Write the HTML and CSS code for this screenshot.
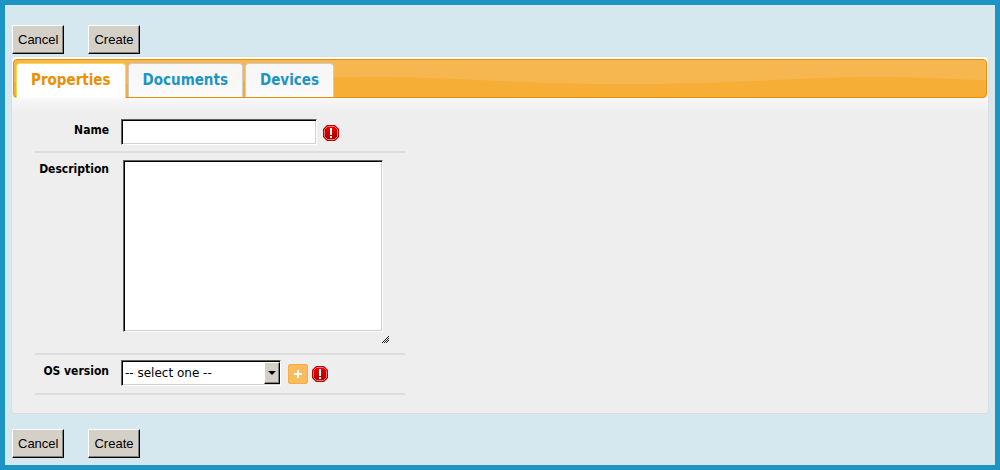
FILE: index.html
```html
<!DOCTYPE html>
<html lang="en">
<head>
  <meta charset="UTF-8">
  <meta name="viewport" content="width=device-width, initial-scale=1.0">
  <title>Create</title>
  <link rel="stylesheet" href="styles.css">
</head>
<body>
  <svg class="sprite" width="0" height="0" aria-hidden="true">
    <defs>
      <linearGradient id="red" x1="0" y1="0" x2="0" y2="1">
        <stop offset="0" stop-color="#f20000"/>
        <stop offset="1" stop-color="#a40000"/>
      </linearGradient>
    </defs>
    <symbol id="required" viewBox="0 0 16 16">
      <path fill="#c00000" d="M4 0h8l4 4v8l-4 4H4l-4-4V4z"/>
      <path fill="url(#red)" stroke="#e87878" d="M4.500 1.500h7l3 3v7l-3 3h-7l-3-3v-7z"/>
      <path fill="#fff" d="M7 3h2v7H7zM7 11h2v2H7z"/>
    </symbol>
  </svg>

  <main class="page">
    <div class="actions">
      <button type="button" class="btn">Cancel</button>
      <button type="submit" form="create-form" class="btn">Create</button>
    </div>

    <div class="tabs">
      <nav class="tabs-nav">
        <a href="#properties" class="tab active">Properties</a>
        <a href="#documents" class="tab">Documents</a>
        <a href="#devices" class="tab">Devices</a>
      </nav>

      <form class="panel" id="create-form">
        <div class="row">
          <label for="name">Name</label>
          <div class="field">
            <input type="text" id="name" class="sunken">
            <svg class="required" role="img" aria-label="Required"><use href="#required"/></svg>
          </div>
        </div>
        <div class="row">
          <label for="description">Description</label>
          <div class="field">
            <div class="resizable">
              <textarea id="description" class="sunken"></textarea>
              <svg class="grip" viewBox="0 0 7 7" shape-rendering="crispEdges" aria-hidden="true">
                <path fill="#222" d="M6 0h1v1H6zM5 1h1v1H5zM4 2h1v1H4zM6 2h1v1H6zM3 3h1v1H3zM5 3h1v1H5zM2 4h1v1H2zM4 4h1v1H4zM6 4h1v1H6zM1 5h1v1H1zM3 5h1v1H3zM5 5h1v1H5zM0 6h1v1H0zM2 6h1v1H2zM4 6h1v1H4z"/>
              </svg>
            </div>
          </div>
        </div>
        <div class="row">
          <label for="os-version">OS version</label>
          <div class="field">
            <span class="select">
              <select id="os-version" class="sunken">
                <option>-- select one --</option>
              </select>
            </span>
            <button type="button" class="add" aria-label="Add OS version">
              <svg viewBox="0 0 8 8" aria-hidden="true"><path fill="#fff" d="M3 0h2v3h3v2H5v3H3V5H0V3h3z"/></svg>
            </button>
            <svg class="required" role="img" aria-label="Required"><use href="#required"/></svg>
          </div>
        </div>
      </form>
    </div>

    <div class="actions">
      <button type="button" class="btn">Cancel</button>
      <button type="submit" form="create-form" class="btn">Create</button>
    </div>
  </main>
</body>
</html>
```
FILE: styles.css
```css
:root {
  --frame: #1c94c4;
  --page-bg: #d5e8ef;
  --panel-bg: #eee;
  --orange: #e78f08;
  --face: #d4d0c8;
}

* {
  box-sizing: border-box;
}

body {
  margin: 0;
  background: var(--page-bg);
  color: #000;
  font-family: "DejaVu Sans Condensed", "DejaVu Sans", sans-serif;
  font-size: 12px;
}

.sprite {
  position: absolute;
}

.page {
  min-height: 100vh;
  padding: 20px 6px 6px;
  border: 5px solid var(--frame);
}

.actions {
  display: flex;
  gap: 24px;
  padding-left: 1px;
}

.btn {
  height: 29px;
  padding: 0 5px;
  border: 1px solid;
  border-color: #fff #000 #000 #fff;
  border-radius: 0;
  background: var(--face);
  box-shadow: inset -1px -1px #808080;
  color: #000;
  font-family: "Liberation Sans", Arial, sans-serif;
  font-size: 13px;
}

/* Tabs */
.tabs {
  margin: 2px 0 15px;
  padding: 2px 1px;
  border: 1px solid #ddd;
  border-radius: 4px;
  background: var(--panel-bg) linear-gradient(#fff 30px, #eee 56px) no-repeat;
}

.tabs-nav {
  display: flex;
  gap: 2px;
  height: 39px;
  padding: 3px 2px 0;
  border: 1px solid var(--orange);
  border-radius: 4px;
  background: #f6ae36 url("data:image/svg+xml,%3Csvg xmlns='http://www.w3.org/2000/svg' width='500' height='37'%3E%3Cpath fill='%23f7b750' d='M0 0H500V17C420 17 360 24 250 24S80 17 0 17z'/%3E%3C/svg%3E") 362px 0 repeat-x;
}

.tab {
  padding: 0 14px;
  border: 1px solid #ccc;
  border-bottom: 0;
  border-radius: 4px 4px 0 0;
  background: linear-gradient(#f6f6f6, #fafafa);
  color: #1c94c4;
  font-size: 15px;
  font-weight: bold;
  line-height: 33px;
  text-decoration: none;
}

.tab.active {
  margin-bottom: -1px;
  border-color: #fbd850;
  background: #fff;
  color: #eb8f00;
}

/* Form */
.panel {
  padding: 15px 22px 16px;
}

.row {
  display: grid;
  grid-template-columns: 74px 1fr;
  column-gap: 12px;
  max-width: 370px;
  padding: 5px 0 7px;
  border-bottom: 2px solid #ddd;
}

.row:first-child {
  padding: 6px 0;
}

.row label {
  padding-top: 4px;
  font-weight: bold;
  text-align: right;
}

.field {
  display: flex;
  align-items: center;
}

.sunken {
  border: 1px solid;
  border-color: #606060 #fff #fff #606060;
  border-radius: 0;
  outline: 0;
  background: #fff;
  box-shadow: inset 1px 1px #000, inset -1px -1px var(--face);
  color: #000;
  font-family: "DejaVu Sans", sans-serif;
  font-size: 12px;
}

input.sunken {
  width: 196px;
  height: 26px;
}

.resizable {
  display: flex;
  flex-direction: column;
  padding: 2px 0 3px 2px;
}

textarea.sunken {
  width: 260px;
  height: 172px;
  resize: none;
}

.grip {
  align-self: flex-end;
  width: 7px;
  height: 7px;
  margin: 4px -6px 0 0;
}

.select {
  position: relative;
}

/* Drop-down button drawn over the native select */
.select::after {
  content: "";
  position: absolute;
  box-sizing: border-box;
  top: 2px;
  right: 1px;
  bottom: 2px;
  width: 16px;
  border: 1px solid;
  border-color: #fff #000 #000 #fff;
  background: var(--face) url("data:image/svg+xml,%3Csvg xmlns='http://www.w3.org/2000/svg' width='8' height='4'%3E%3Cpath d='M0 0h8L4 4z'/%3E%3C/svg%3E") center no-repeat;
  box-shadow: inset -1px -1px #808080;
  pointer-events: none;
}

select.sunken {
  display: block;
  width: 160px;
  height: 26px;
  padding: 0 3px;
  appearance: none;
}

.add {
  display: flex;
  align-items: center;
  justify-content: center;
  width: 20px;
  height: 20px;
  margin: 2px 0 0 7px;
  padding: 0;
  border: 1px solid #f6ae45;
  border-radius: 2px;
  background: #f9bb5c;
}

.add svg {
  width: 8px;
  height: 8px;
}

.required {
  width: 16px;
  height: 16px;
  margin: 2px 0 0 6px;
}

.add + .required {
  margin-left: 4px;
}
```
